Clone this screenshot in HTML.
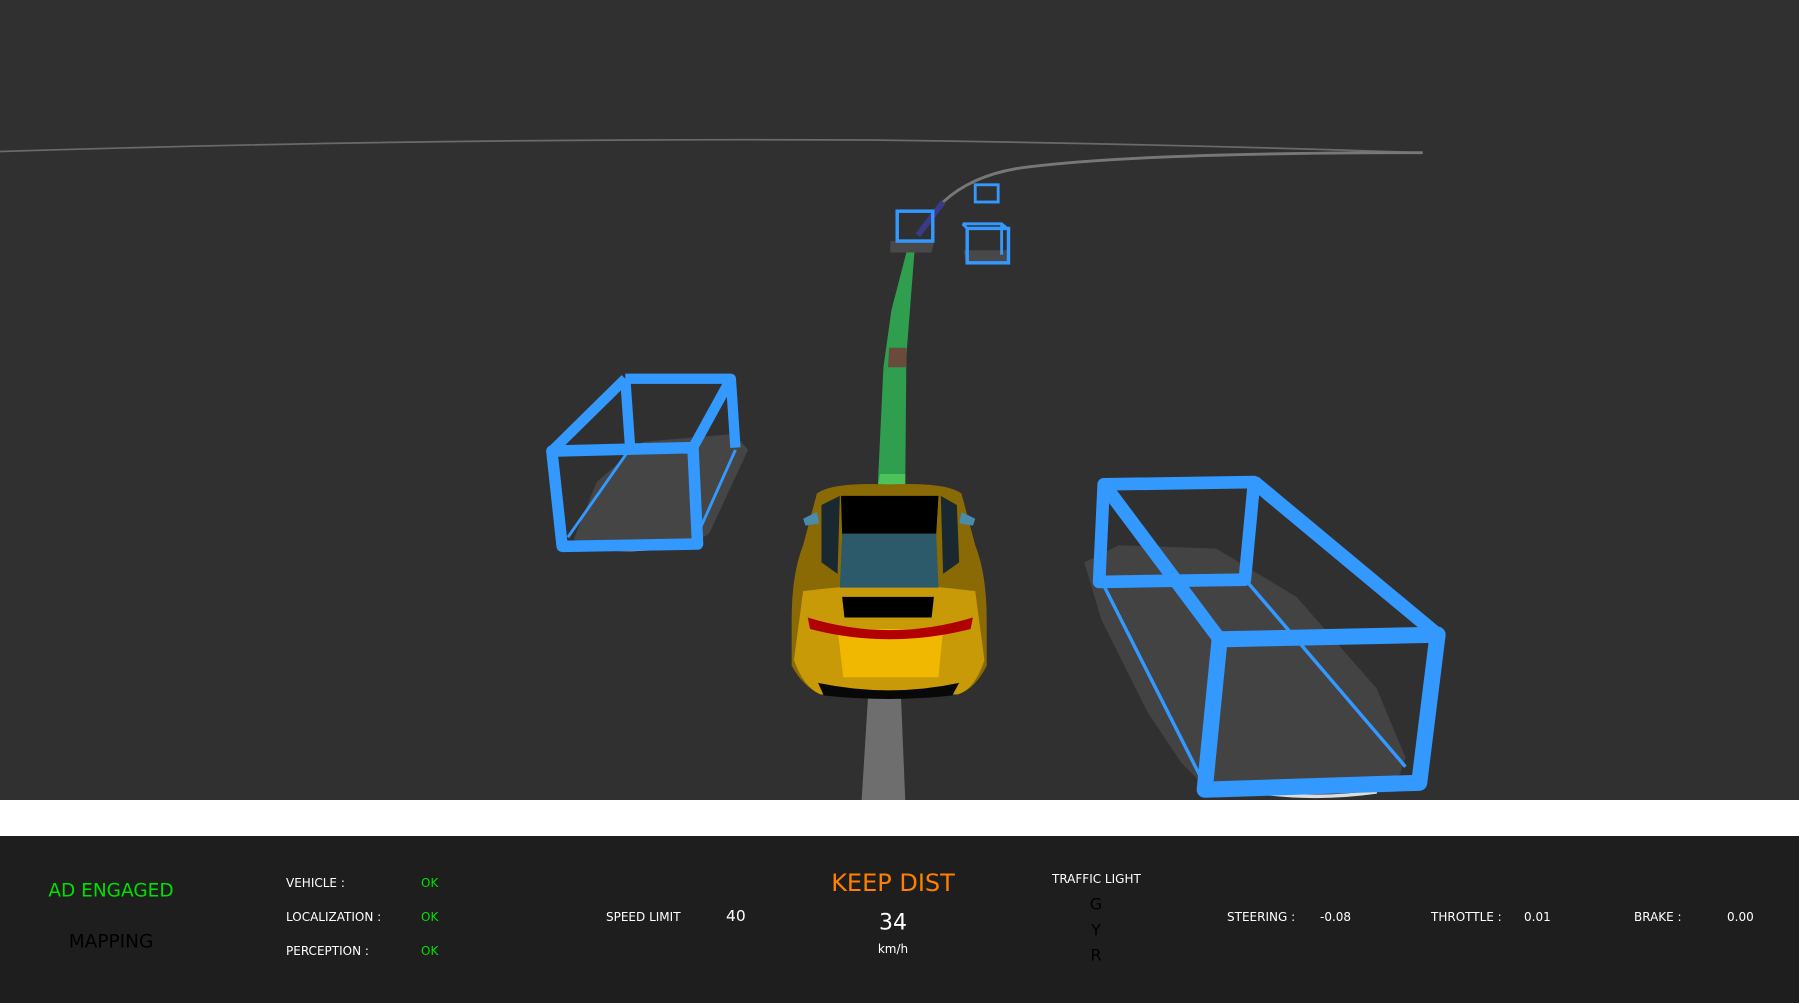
<!DOCTYPE html>
<html><head><meta charset="utf-8"><style>
html,body{margin:0;padding:0;width:1799px;height:1003px;overflow:hidden;background:#1e1e1e;font-family:"DejaVu Sans","Liberation Sans",sans-serif;}
#scene{position:absolute;left:0;top:0;width:1799px;height:800px;background:#303030;}
#band{position:absolute;left:0;top:800px;width:1799px;height:36px;background:#fff;}
#panel{position:absolute;left:0;top:836px;width:1799px;height:167px;background:#1e1e1e;}
.t{position:absolute;white-space:nowrap;color:#fff;font-size:12px;transform:translateY(-50%);}
.c{transform:translate(-50%,-50%);}
.g{color:#00e000;}
</style></head><body>
<div id="scene">
<svg width="1799" height="800" viewBox="0 0 1568 697" preserveAspectRatio="none">
<path d="M0 132 Q380 120 760 122 Q1000 125 1240 133" stroke="#6a6a6a" stroke-width="1.5" fill="none"/>
<path d="M822 176 Q850 150 900 145 Q1000 133 1240 133" stroke="#777" stroke-width="2.5" fill="none"/>
<path d="M800 205 L822 176" stroke="#3a3a8a" stroke-width="5" fill="none"/>
<polygon points="757,600 785,600 789,697 751,697" fill="#6e6e6e"/>
<polygon points="790,220 797,220 790,310 789,425 765,425 770,320 777,270" fill="#2f9e4f"/>
<polygon points="775,303 790,303 790,320 774,320" fill="#6a4a3a"/>
<polygon points="767,413 789,413 789,426 765,426" fill="#4cc25a"/>
<polygon points="776,210 814,210 812,220 776,220" fill="#484848"/>
<rect x="782" y="184" width="31" height="26" fill="none" stroke="#3399ff" stroke-width="3"/>
<rect x="850" y="161" width="20" height="15" fill="none" stroke="#3399ff" stroke-width="2.5"/>
<polygon points="840,218 880,218 878,230 842,230" fill="#484848"/>
<rect x="843" y="199" width="36" height="30" fill="none" stroke="#3399ff" stroke-width="3"/>
<path d="M839 195 L873 195 L880 201 M839 195 L843 199 M873 195 L873 222" stroke="#3399ff" stroke-width="2.5" fill="none"/>
<polygon points="500,470 520,420 560,385 640,378 652,392 618,465 600,476 545,480" fill="#454545"/>
<path d="M500 474 Q545 484 596 474" stroke="#ddd" stroke-width="2.5" fill="none"/>
<path d="M545 330 L637 330 L641 390 M545 330 L549 387 M545 330 L481 393 M637 330 L604 390" stroke="#3399ff" stroke-width="9" fill="none" stroke-linejoin="round"/>
<polygon points="481,393 604,390 608,474 490,476" fill="none" stroke="#3399ff" stroke-width="10" stroke-linejoin="round"/>
<path d="M549 391 L495 468 M641 392 L606 470" stroke="#3399ff" stroke-width="2.5" fill="none"/>
<polygon points="945,490 975,475 1060,478 1130,520 1200,600 1225,660 1215,690 1060,695 1030,665 1000,620 960,540" fill="#434343"/>
<path d="M1062 684 Q1130 700 1200 690" stroke="#ddd" stroke-width="3" fill="none"/>
<path d="M962 422 L1093 420 L1085 505 L958 507 Z" stroke="#3399ff" stroke-width="11" fill="none" stroke-linejoin="round"/>
<path d="M962 422 L1063 557 M1093 420 L1253 553" stroke="#3399ff" stroke-width="12" fill="none"/>
<polygon points="1063,557 1253,553 1237,682 1050,688" fill="none" stroke="#3399ff" stroke-width="14" stroke-linejoin="round"/>
<path d="M962 510 L1048 680 M1088 508 L1225 668" stroke="#3399ff" stroke-width="3" fill="none"/>
<g>
<path d="M712 430 Q725 420 775 422 Q825 420 838 430 L850 475 Q860 500 860 540 L860 580 Q850 600 835 605 L715 605 Q700 598 690 580 L690 540 Q690 500 700 475 Z" fill="#8a6a05"/>
<path d="M700 515 Q775 505 850 515 L858 575 Q850 600 835 605 L715 605 Q700 598 692 575 Z" fill="#c99a08"/>
<polygon points="730,548 822,548 818,590 735,590" fill="#f0b800"/>
<path d="M704 538 Q775 560 848 538 L846 548 Q775 566 706 548 Z" fill="#b00000"/>
<polygon points="733,432 818,432 816,465 734,465" fill="#000"/>
<polygon points="734,465 816,465 818,512 732,512" fill="#2d5a6a"/>
<polygon points="734,520 814,520 812,538 736,538" fill="#000"/>
<path d="M713 595 Q775 608 836 595 L830 606 Q775 612 718 606 Z" fill="#080808"/>
<polygon points="716,440 732,432 730,500 716,490" fill="#1a2830"/>
<polygon points="834,440 820,432 822,500 836,490" fill="#1a2830"/>
<polygon points="700,452 712,446 714,456 702,458" fill="#4a8aaa"/>
<polygon points="850,452 838,446 836,456 848,458" fill="#4a8aaa"/>
</g>
</svg>
</div>
<div id="band"></div>
<div id="panel"></div>
<div class="t c g" style="left:111px;top:891px;font-size:18.5px;">AD ENGAGED</div>
<div class="t c" style="left:111px;top:942px;font-size:18.5px;color:#000;">MAPPING</div>
<div class="t" style="left:286px;top:883px;">VEHICLE :</div>
<div class="t" style="left:286px;top:917px;">LOCALIZATION :</div>
<div class="t" style="left:286px;top:951px;">PERCEPTION :</div>
<div class="t g" style="left:421px;top:883px;">OK</div>
<div class="t g" style="left:421px;top:917px;">OK</div>
<div class="t g" style="left:421px;top:951px;">OK</div>
<div class="t" style="left:606px;top:917px;">SPEED LIMIT</div>
<div class="t" style="left:726px;top:916px;font-size:15.5px;">40</div>
<div class="t c" style="left:893px;top:883px;font-size:24px;color:#ff8000;">KEEP DIST</div>
<div class="t c" style="left:893px;top:923px;font-size:22px;">34</div>
<div class="t c" style="left:893px;top:949px;font-size:12px;">km/h</div>
<div class="t" style="left:1052px;top:879px;">TRAFFIC LIGHT</div>
<div class="t c" style="left:1096px;top:904px;font-size:16px;color:#000;">G</div>
<div class="t c" style="left:1096px;top:930px;font-size:16px;color:#000;">Y</div>
<div class="t c" style="left:1096px;top:955px;font-size:16px;color:#000;">R</div>
<div class="t" style="left:1227px;top:917px;">STEERING :</div>
<div class="t" style="left:1320px;top:917px;">-0.08</div>
<div class="t" style="left:1431px;top:917px;">THROTTLE :</div>
<div class="t" style="left:1524px;top:917px;">0.01</div>
<div class="t" style="left:1634px;top:917px;">BRAKE :</div>
<div class="t" style="left:1727px;top:917px;">0.00</div>
</body></html>
